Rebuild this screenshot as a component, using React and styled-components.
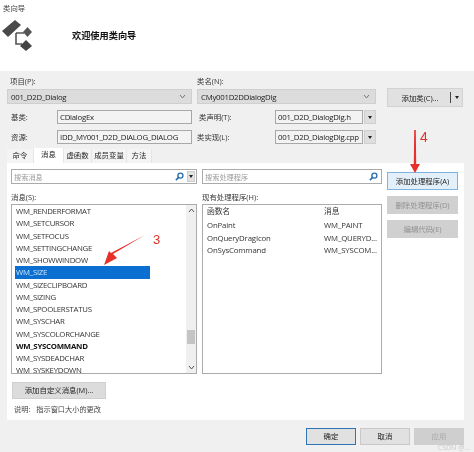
import React from "react";
import styled, { createGlobalStyle } from "styled-components";

const GlobalStyle = createGlobalStyle`
  html, body { margin: 0; padding: 0; background: #f0f0f0; }
  * { box-sizing: border-box; }
`;

const messages = [
  "WM_RENDERFORMAT",
  "WM_SETCURSOR",
  "WM_SETFOCUS",
  "WM_SETTINGCHANGE",
  "WM_SHOWWINDOW",
  "WM_SIZE",
  "WM_SIZECLIPBOARD",
  "WM_SIZING",
  "WM_SPOOLERSTATUS",
  "WM_SYSCHAR",
  "WM_SYSCOLORCHANGE",
  "WM_SYSCOMMAND",
  "WM_SYSDEADCHAR",
  "WM_SYSKEYDOWN",
];

const handlers = [
  ["OnPaint", "WM_PAINT"],
  ["OnQueryDragIcon", "WM_QUERYD..."],
  ["OnSysCommand", "WM_SYSCOM..."],
];

const tabs = ["命令", "消息", "虚函数", "成员变量", "方法"];

const Window = styled.div`
  position: relative;
  width: 474px;
  height: 452px;
  overflow: hidden;
  display: flex;
  flex-direction: column;
  background: #f0f0f0;
  color: #222;
  font: 7.8px/12px "Open Sans", "Noto Sans CJK SC", sans-serif;
  filter: blur(0.3px);
`;

const Header = styled.header`
  height: 71px;
  flex: none;
  background: #fff;
  padding: 3px 3px;
`;

const Caption = styled.div`
  font-size: 7.4px;
  line-height: 10px;
  color: #444;
`;

const Banner = styled.div`
  display: flex;
  align-items: center;
  margin: 7px 0 0 -1px;
`;

const Title = styled.h1`
  margin: 0 0 0 38px;
  font-size: 9.2px;
  font-weight: 700;
  color: #111;
`;

const Body = styled.div`
  flex: 1;
  padding: 4px 10px 0 7px;
`;

const TopForm = styled.div`
  display: grid;
  grid-template-columns: 185px 179px 76px;
  column-gap: 5px;
  height: 73px;
`;

const FormColumn = styled.div`
  display: flex;
  flex-direction: column;
`;

const SmallLabel = styled.div`
  height: 14px;
  padding-left: ${(p) => p.$indent || 0}px;
  font-size: 7.4px;
  color: #333;
`;

const Combo = styled.div`
  height: 15px;
  display: flex;
  align-items: center;
  justify-content: space-between;
  padding: 0 5px 0 3px;
  background: #dcdcdc;
  border: 1px solid #cfcfcf;
  color: #222;
  letter-spacing: -0.25px;
  white-space: nowrap;
  overflow: hidden;
`;

const FieldRow = styled.div`
  display: flex;
  align-items: center;
  height: 14px;
  margin-top: ${(p) => p.$top || 6}px;
`;

const FieldLabel = styled.label`
  flex: none;
  width: ${(p) => p.$width}px;
  padding-left: ${(p) => p.$indent}px;
  font-size: 7.4px;
  color: #333;
`;

const Field = styled.div`
  width: ${(p) => p.$width}px;
  height: 14px;
  padding: 0 2px;
  background: #f3f3f3;
  border: 1px solid #a8a8a8;
  color: #222;
  line-height: 12px;
  letter-spacing: -0.25px;
  white-space: nowrap;
  overflow: hidden;
`;

const DropButton = styled.div`
  width: 12px;
  height: 14px;
  margin-left: 1px;
  display: flex;
  align-items: center;
  justify-content: center;
  background: #dedede;
  border: 1px solid #cfcfcf;
`;

const Caret = styled.span`
  width: 0;
  height: 0;
  border-left: 2.5px solid transparent;
  border-right: 2.5px solid transparent;
  border-top: 3px solid #222;
`;

const SplitButton = styled.div`
  position: relative;
  top: 13px;
  left: 6px;
  height: 19px;
  display: flex;
  align-items: center;
  background: #e1e1e1;
  border: 1px solid #d2d2d2;
  font-size: 7.4px;
`;

const SplitLabel = styled.span`
  flex: 1;
  text-align: center;
  padding-left: 2px;
`;

const SplitDrop = styled.span`
  width: 12px;
  height: 11px;
  display: flex;
  align-items: center;
  justify-content: center;
  border-left: 1px solid #444;
`;

const TabStrip = styled.div`
  display: flex;
  align-items: flex-end;
  height: 15px;
  font-size: 7.4px;
`;

const Tab = styled.div`
  height: ${(p) => (p.$active ? 15 : 14)}px;
  width: ${(p) => p.$width}px;
  text-align: center;
  line-height: 13px;
  background: ${(p) => (p.$active ? "#fff" : "#f4f4f4")};
  border-right: 1px solid #e6e6e6;
`;

const Panel = styled.div`
  width: 457px;
  height: 257px;
  padding: 6px 5px 0 4px;
  display: grid;
  grid-template-columns: 186px 180px 71px;
  column-gap: 5px;
  background: #fff;
`;

const ListColumn = styled.div`
  display: flex;
  flex-direction: column;
`;

const SearchBox = styled.div`
  height: 15px;
  display: flex;
  align-items: center;
  padding-left: 2px;
  border: 1px solid #ababab;
  color: #9a9a9a;
  font-size: 7.2px;
`;

const SearchText = styled.span`
  flex: 1;
`;

const SearchIcon = styled.svg`
  width: 9px;
  height: 9px;
  margin-right: ${(p) => p.$gap}px;
`;

const SearchDrop = styled.span`
  width: 8px;
  height: 11px;
  margin-right: 1px;
  display: flex;
  align-items: center;
  justify-content: center;
  background: #e2e2e2;
  border: 1px solid #ccc;
`;

const ListLabel = styled.div`
  height: 20px;
  padding-top: 7px;
  font-size: 7.4px;
  color: #333;
`;

const ListBox = styled.div`
  position: relative;
  height: 170px;
  padding-left: 3px;
  border: 1px solid #ababab;
  overflow: hidden;
`;

const ListRow = styled.div`
  height: 12.25px;
  width: 135px;
  padding-left: 1px;
  line-height: 12px;
  letter-spacing: -0.25px;
  white-space: nowrap;
  font-weight: ${(p) => (p.$bold ? 700 : 400)};
  color: ${(p) => (p.$selected ? "#cfe4f7" : p.$bold ? "#111" : "#333")};
  background: ${(p) => (p.$selected ? "#0a6fd0" : "transparent")};
`;

const Scrollbar = styled.div`
  position: absolute;
  top: 0;
  right: 0;
  bottom: 0;
  width: 10px;
  display: flex;
  flex-direction: column;
  justify-content: space-between;
  align-items: center;
  padding: 3px 0;
  background: #f0f0f0;
`;

const ScrollThumb = styled.div`
  position: absolute;
  top: 125px;
  left: 1px;
  width: 8px;
  height: 14px;
  background: #c4c4c4;
`;

const ScrollArrow = styled.svg`
  width: 7px;
  height: 5px;
`;

const HandlerList = styled.div`
  height: 170px;
  padding: 0 4px;
  border: 1px solid #ababab;
`;

const HandlerRow = styled.div`
  display: grid;
  grid-template-columns: 117px 1fr;
  height: 12.4px;
  margin-top: ${(p) => p.$top || 0}px;
  line-height: 12px;
  letter-spacing: -0.15px;
  white-space: nowrap;
  color: #333;
`;

const ActionColumn = styled.div`
  display: flex;
  flex-direction: column;
  gap: 6px;
  padding-top: 3px;
`;

const ActionButton = styled.div`
  height: 18px;
  line-height: 16px;
  text-align: center;
  font-size: 7.4px;
  white-space: nowrap;
  color: ${(p) => (p.$disabled ? "#909090" : "#222")};
  background: ${(p) => (p.$primary ? "#e3eff9" : "#d0d0d0")};
  border: 1px solid ${(p) => (p.$primary ? "#7fb4e0" : "#d0d0d0")};
`;

const CustomButton = styled.div`
  width: 94px;
  height: 17px;
  margin: 8px 0 0 1px;
  line-height: 15px;
  text-align: center;
  font-size: 7.4px;
  white-space: nowrap;
  background: #dcdcdc;
  border: 1px solid #cfcfcf;
`;

const Description = styled.div`
  display: flex;
  gap: 6px;
  margin: 4px 0 0 3px;
  font-size: 7.2px;
  color: #444;
  white-space: nowrap;
`;

const Footer = styled.div`
  display: flex;
  justify-content: flex-end;
  gap: 4px;
  width: 457px;
  margin-top: 8px;
`;

const FooterButton = styled.div`
  width: ${(p) => p.$width}px;
  height: 17px;
  line-height: 15px;
  text-align: center;
  font-size: 7.4px;
  color: ${(p) => (p.$disabled ? "#aaa" : "#222")};
  background: ${(p) => (p.$disabled ? "#cfcfcf" : "#e1e1e1")};
  border: 1px solid ${(p) => (p.$default ? "#2f74b5" : p.$disabled ? "#cfcfcf" : "#c8c8c8")};
`;

const Annotation = styled.svg`
  position: absolute;
  inset: 0;
  width: 474px;
  height: 452px;
  pointer-events: none;
`;

const Marker = styled.span`
  position: absolute;
  left: ${(p) => p.$x}px;
  top: ${(p) => p.$y}px;
  font: ${(p) => p.$size}px/1 "Liberation Sans", sans-serif;
  color: #e0322c;
`;

const Watermark = styled.span`
  position: absolute;
  right: 4px;
  bottom: 1px;
  font: 7px/1 "Open Sans", sans-serif;
  color: #c9c9c9;
`;

const WizardIcon = () => (
  <svg width="32" height="32" viewBox="0 0 32 32">
    <path d="M0 11 L13 0 L19 5 L6 17 Z" fill="#4a4a4a" />
    <path d="M14 13 V24 H20 M14 13 H22" fill="none" stroke="#555" strokeWidth="1.6" />
    <path d="M21 12 L25.5 7 L30 12 L25.5 17 Z" fill="#555" />
    <path d="M18 26 L24 20 L30 26 L24 31 Z" fill="#444" />
  </svg>
);

const Magnifier = ({ gap }) => (
  <SearchIcon $gap={gap} viewBox="0 0 10 10">
    <circle cx="6" cy="4" r="2.8" fill="none" stroke="#2a6fb0" strokeWidth="1.5" />
    <path d="M4 6 L1 9" stroke="#2a6fb0" strokeWidth="1.8" />
  </SearchIcon>
);

export default function App() {
  return (
    <>
      <GlobalStyle />
      <Window>
        <Header>
          <Caption>类向导</Caption>
          <Banner>
            <WizardIcon />
            <Title>欢迎使用类向导</Title>
          </Banner>
        </Header>
        <Body>
          <TopForm>
            <FormColumn>
              <SmallLabel $indent={3}>项目(P):</SmallLabel>
              <Combo>
                001_D2D_Dialog
                <ScrollArrow viewBox="0 0 7 5">
                  <path d="M1 1 L3.5 4 L6 1" fill="none" stroke="#777" />
                </ScrollArrow>
              </Combo>
              <FieldRow>
                <FieldLabel $width={50} $indent={4}>基类:</FieldLabel>
                <Field $width={135}>CDialogEx</Field>
              </FieldRow>
              <FieldRow>
                <FieldLabel $width={50} $indent={4}>资源:</FieldLabel>
                <Field $width={135}>IDD_MY001_D2D_DIALOG_DIALOG</Field>
              </FieldRow>
            </FormColumn>
            <FormColumn>
              <SmallLabel>类名(N):</SmallLabel>
              <Combo>
                CMy001D2DDialogDlg
                <ScrollArrow viewBox="0 0 7 5">
                  <path d="M1 1 L3.5 4 L6 1" fill="none" stroke="#777" />
                </ScrollArrow>
              </Combo>
              <FieldRow>
                <FieldLabel $width={78} $indent={2}>类声明(T):</FieldLabel>
                <Field $width={88}>001_D2D_DialogDlg.h</Field>
                <DropButton><Caret /></DropButton>
              </FieldRow>
              <FieldRow>
                <FieldLabel $width={78} $indent={0}>类实现(L):</FieldLabel>
                <Field $width={88}>001_D2D_DialogDlg.cpp</Field>
                <DropButton><Caret /></DropButton>
              </FieldRow>
            </FormColumn>
            <div>
              <SplitButton>
                <SplitLabel>添加类(C)...</SplitLabel>
                <SplitDrop><Caret /></SplitDrop>
              </SplitButton>
            </div>
          </TopForm>

          <TabStrip>
            {tabs.map((tab, i) => (
              <Tab key={tab} $active={i === 1} $width={[27, 30, 28, 35, 25][i]}>{tab}</Tab>
            ))}
          </TabStrip>

          <Panel>
            <ListColumn>
              <SearchBox>
                <SearchText>搜索消息</SearchText>
                <Magnifier gap={3} />
                <SearchDrop><Caret /></SearchDrop>
              </SearchBox>
              <ListLabel>消息(S):</ListLabel>
              <ListBox>
                {messages.map((m) => (
                  <ListRow key={m} $selected={m === "WM_SIZE"} $bold={m === "WM_SYSCOMMAND"}>{m}</ListRow>
                ))}
                <Scrollbar>
                  <ScrollArrow viewBox="0 0 7 5">
                    <path d="M1 4 L3.5 1 L6 4" fill="none" stroke="#555" />
                  </ScrollArrow>
                  <ScrollThumb />
                  <ScrollArrow viewBox="0 0 7 5">
                    <path d="M1 1 L3.5 4 L6 1" fill="none" stroke="#555" />
                  </ScrollArrow>
                </Scrollbar>
              </ListBox>
              <CustomButton>添加自定义消息(M)...</CustomButton>
              <Description>
                <span>说明:</span>
                <span>指示窗口大小的更改</span>
              </Description>
            </ListColumn>

            <ListColumn>
              <SearchBox>
                <SearchText>搜索处理程序</SearchText>
                <Magnifier gap={3} />
              </SearchBox>
              <ListLabel>现有处理程序(H):</ListLabel>
              <HandlerList>
                <HandlerRow>
                  <span>函数名</span>
                  <span>消息</span>
                </HandlerRow>
                {handlers.map(([name, msg], i) => (
                  <HandlerRow key={name} $top={i === 0 ? 2 : 0}>
                    <span>{name}</span>
                    <span>{msg}</span>
                  </HandlerRow>
                ))}
              </HandlerList>
            </ListColumn>

            <ActionColumn>
              <ActionButton $primary>添加处理程序(A)</ActionButton>
              <ActionButton $disabled>删除处理程序(D)</ActionButton>
              <ActionButton $disabled>编辑代码(E)</ActionButton>
            </ActionColumn>
          </Panel>

          <Footer>
            <FooterButton $width={50} $default>确定</FooterButton>
            <FooterButton $width={50}>取消</FooterButton>
            <FooterButton $width={50} $disabled>应用</FooterButton>
          </Footer>
        </Body>

        <Annotation viewBox="0 0 474 452">
          <path d="M145 235 L113 254 L117 258 L104 265 L109 251 L111 253 Z" fill="#e8302a" />
          <path d="M414.2 130 L415.8 130 L416.2 164 L420 164 L415 173 L410 164 L413.8 164 Z" fill="#e8302a" />
        </Annotation>
        <Marker $x={153} $y={233} $size={13}>3</Marker>
        <Marker $x={420} $y={130} $size={14}>4</Marker>
        <Watermark>CSDN @...</Watermark>
      </Window>
    </>
  );
}
